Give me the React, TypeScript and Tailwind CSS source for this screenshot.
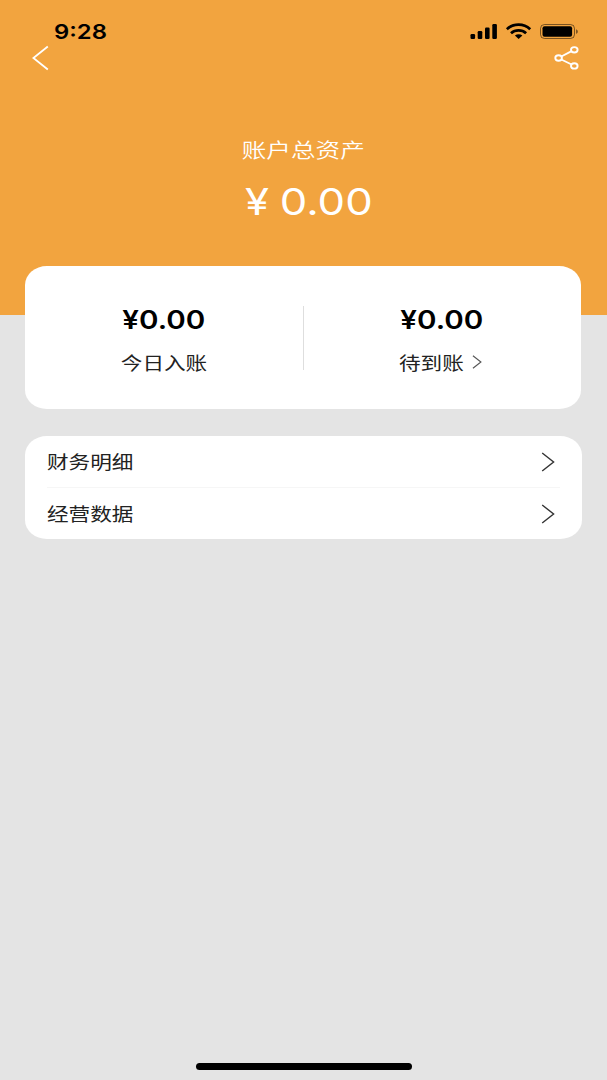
import type { ReactNode } from 'react';

const SANS = "font-['Noto_Sans_CJK_SC',sans-serif]";
const NUM = "font-['Inter','Liberation_Sans',sans-serif]";

const menuItems = [
  { id: 'finance', label: '财务明细' },
  { id: 'business', label: '经营数据' },
];

const StatusBar = () => (
  <div className="flex h-[42px] items-start justify-between pl-[54px] pr-[28px] pt-[22px] text-black">
    <span className={`${NUM} h-5 origin-left scale-x-[1.19] text-[20px] font-semibold leading-5`}>9:28</span>
    <svg className="h-5 w-[110px]" viewBox="0 0 110 20">
      <rect x="1.5" y="12" width="4.6" height="5" rx="1.2" />
      <rect x="8.7" y="9" width="4.6" height="8" rx="1.2" />
      <rect x="16" y="5.6" width="4.6" height="11.4" rx="1.2" />
      <rect x="23.3" y="2" width="4.6" height="15" rx="1.2" />
      <g fill="none" stroke="#000" strokeWidth="2.8">
        <path d="M37.9 7.2C44.5 1.1 54.6 1.1 61.2 7.2" />
        <path d="M42 11.2C46.3 7.4 52.8 7.4 57.1 11.2" />
      </g>
      <path d="M45.9 13.5c2.2-1.8 5.3-1.8 7.5 0L49.6 17z" />
      <rect x="71.5" y="2.5" width="34" height="14" rx="4" fill="none" stroke="#000" strokeOpacity=".5" />
      <rect x="73.5" y="4.2" width="29.6" height="10.6" rx="2" />
      <path d="M107.2 7.2c2 .8 2 3.8 0 4.6z" fillOpacity=".6" />
    </svg>
  </div>
);

const Chevron = ({ small = false }: { small?: boolean }) => (
  <svg
    className={small ? 'h-[14px] w-[10px]' : 'h-5 w-[14px]'}
    viewBox="0 0 14 20"
    fill="none"
    stroke={small ? '#555' : '#333'}
    strokeWidth={small ? 1.6 : 1.4}
  >
    <path d="M1.2 1 12.6 10 1.2 19" />
  </svg>
);

const Stat = ({ amount, children }: { amount: string; children: ReactNode }) => (
  <div className="flex flex-1 flex-col items-center pt-10">
    <span className={`${NUM} scale-x-[1.16] text-[25.5px] font-semibold leading-[28px] text-black`}>{amount}</span>
    <div className="mt-[14px] flex h-[28px] items-center">{children}</div>
  </div>
);

const App = () => {
  return (
    <div className={`${SANS} flex h-[1080px] w-[607px] flex-col overflow-hidden bg-[#e4e4e4]`}>
      <header className="h-[315px] shrink-0 bg-[#f2a43f] text-white">
        <StatusBar />
        <div className="flex h-8 items-center justify-between pl-8 pr-[27px]">
          <svg className="h-[26px] w-[17px]" viewBox="0 0 17 26" fill="none" stroke="#fff" strokeWidth="1.8">
            <path d="M15.8 1.5 1.4 13 15.8 24.5" />
          </svg>
          <svg className="h-[26px] w-[26px]" viewBox="0 0 26 26" fill="none" stroke="#fff" strokeWidth="1.9">
            <ellipse cx="4.6" cy="13" rx="3.3" ry="2.7" />
            <ellipse cx="20.3" cy="4.8" rx="3.3" ry="2.7" />
            <ellipse cx="20.3" cy="20.9" rx="3.3" ry="2.7" />
            <path d="M7.3 11.5 17.6 6.2M7.3 14.5 17.6 19.5" />
          </svg>
        </div>
        <div className="mt-[59px] flex flex-col items-center">
          <span className="scale-x-[1.2] text-[20.5px] font-[350] leading-8">账户总资产</span>
          <div className={`${NUM} mt-[15px] flex scale-x-[1.18] gap-[9px] pl-[9px] text-[37px] font-normal leading-[44px]`}>
            <span>¥</span>
            <span>0.00</span>
          </div>
        </div>
      </header>

      <section className="-mt-[49px] ml-[25px] flex h-[143px] w-[556px] shrink-0 rounded-[22px/19px] bg-white">
        <Stat amount="¥0.00">
          <span className="scale-x-[1.2] text-[18px] leading-[28px] text-[#222]">今日入账</span>
        </Stat>
        <div className="mt-10 h-16 w-px bg-[#dedede]" />
        <Stat amount="¥0.00">
          <span className="w-[65px] origin-left scale-x-[1.2] whitespace-nowrap text-[18px] leading-[28px] text-[#222]">待到账</span>
          <span className="ml-2 flex pr-[3px]"><Chevron small /></span>
        </Stat>
      </section>

      <section className="ml-[25px] mt-[27px] h-[103px] w-[557px] shrink-0 rounded-[22px/19px] bg-white pl-[22px] pr-[22px]">
        {menuItems.map((item, index) => (
          <div
            key={item.id}
            className={`flex items-center justify-between pr-[5px] ${index > 0 ? 'h-[51px]' : 'h-[52px] border-b border-[#f6f6f6]'}`}
          >
            <span className="origin-left scale-x-[1.2] text-[18px] text-[#222]">{item.label}</span>
            <Chevron />
          </div>
        ))}
      </section>

      <div className="mx-auto mb-[10px] mt-auto h-[7px] w-[216px] shrink-0 rounded-full bg-black" />
    </div>
  );
};

export default App;
